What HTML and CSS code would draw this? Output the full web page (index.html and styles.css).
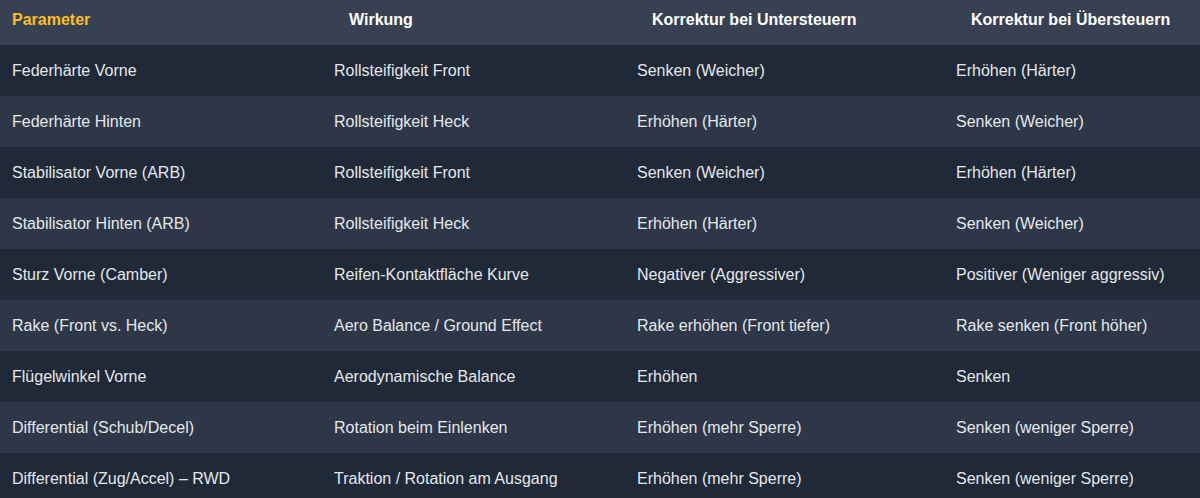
FILE: index.html
```html
<!DOCTYPE html>
<html lang="de">
<head>
<meta charset="utf-8">
<title>Setup Tabelle</title>
<link rel="stylesheet" href="styles.css">
</head>
<body>
<table class="setup">
  <colgroup>
    <col class="c1"><col class="c2"><col class="c3"><col class="c4">
  </colgroup>
  <thead>
    <tr>
      <th class="first">Parameter</th>
      <th>Wirkung</th>
      <th>Korrektur bei Untersteuern</th>
      <th>Korrektur bei Übersteuern</th>
    </tr>
  </thead>
  <tbody>
    <tr><td>Federhärte Vorne</td><td>Rollsteifigkeit Front</td><td>Senken (Weicher)</td><td>Erhöhen (Härter)</td></tr>
    <tr><td>Federhärte Hinten</td><td>Rollsteifigkeit Heck</td><td>Erhöhen (Härter)</td><td>Senken (Weicher)</td></tr>
    <tr><td>Stabilisator Vorne (ARB)</td><td>Rollsteifigkeit Front</td><td>Senken (Weicher)</td><td>Erhöhen (Härter)</td></tr>
    <tr><td>Stabilisator Hinten (ARB)</td><td>Rollsteifigkeit Heck</td><td>Erhöhen (Härter)</td><td>Senken (Weicher)</td></tr>
    <tr><td>Sturz Vorne (Camber)</td><td>Reifen-Kontaktfläche Kurve</td><td>Negativer (Aggressiver)</td><td>Positiver (Weniger aggressiv)</td></tr>
    <tr><td>Rake (Front vs. Heck)</td><td>Aero Balance / Ground Effect</td><td>Rake erhöhen (Front tiefer)</td><td>Rake senken (Front höher)</td></tr>
    <tr><td>Flügelwinkel Vorne</td><td>Aerodynamische Balance</td><td>Erhöhen</td><td>Senken</td></tr>
    <tr><td>Differential (Schub/Decel)</td><td>Rotation beim Einlenken</td><td>Erhöhen (mehr Sperre)</td><td>Senken (weniger Sperre)</td></tr>
    <tr><td>Differential (Zug/Accel) – RWD</td><td>Traktion / Rotation am Ausgang</td><td>Erhöhen (mehr Sperre)</td><td>Senken (weniger Sperre)</td></tr>
  </tbody>
</table>
</body>
</html>
```

FILE: styles.css
```css
html, body {
  margin: 0;
  padding: 0;
  background: #1f2937;
}

.setup {
  width: 1200px;
  border-collapse: collapse;
  table-layout: fixed;
  font-family: "Liberation Sans", Arial, sans-serif;
  font-size: 16px;
  color: #e5e7eb;
}

.c1 { width: 322px; }
.c2 { width: 303px; }
.c3 { width: 319px; }
.c4 { width: 256px; }

.setup thead tr {
  background: #374151;
}

.setup th {
  text-align: left;
  font-weight: bold;
  color: #ffffff;
  line-height: 18px;
  padding: 11px 12px 16px 27px;
  white-space: nowrap;
}

.setup th.first {
  color: #fbbf24;
  padding-left: 12px;
}

.setup td {
  line-height: 19px;
  padding: 16px 12px;
  white-space: nowrap;
}

.setup tbody tr:nth-child(odd) {
  background: #1f2937;
}

.setup tbody tr:nth-child(even) {
  background: #2d3748;
}
```
